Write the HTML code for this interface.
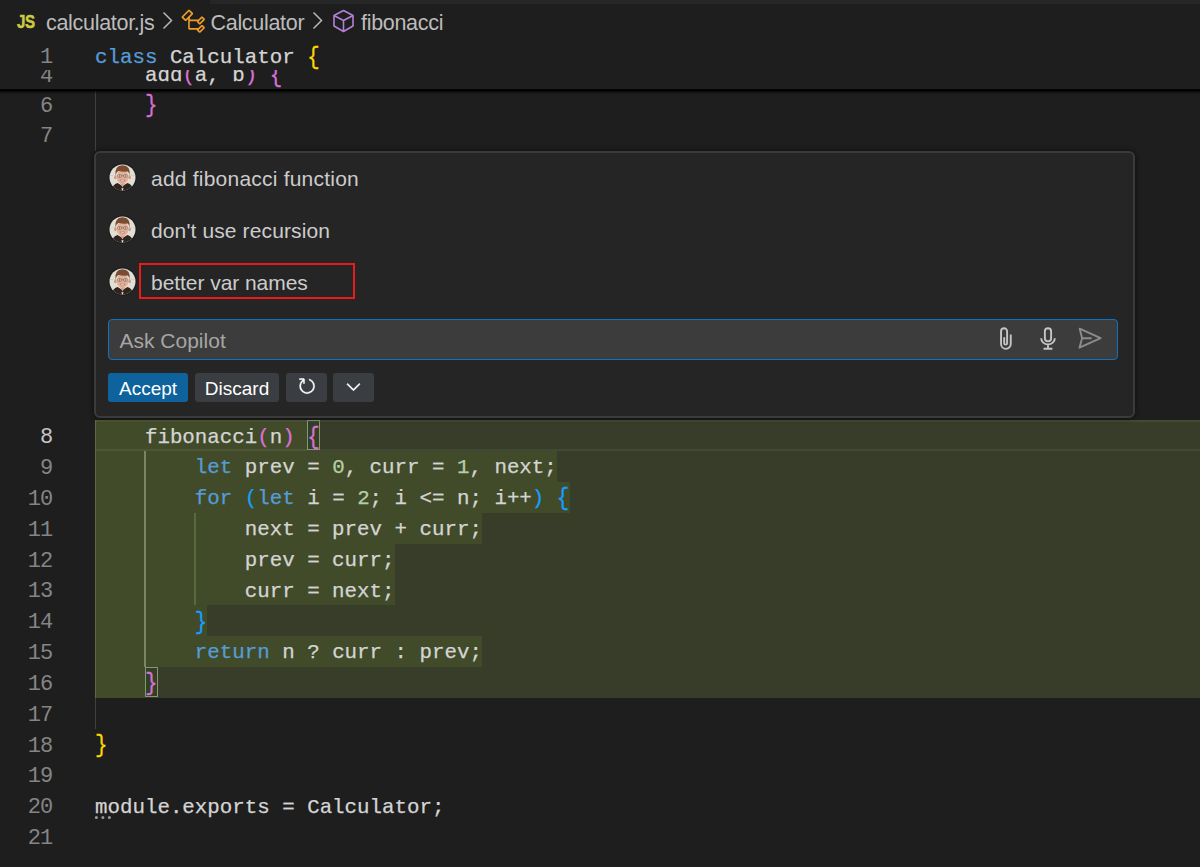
<!DOCTYPE html>
<html><head><meta charset="utf-8">
<style>
*{margin:0;padding:0;box-sizing:border-box}
html,body{width:1200px;height:867px;overflow:hidden;background:#1e1e1e}
body{position:relative;font-family:"Liberation Sans",sans-serif}
.abs{position:absolute}
.topstrip{left:210px;top:0;width:990px;height:3.5px;background:#262626}
.bc{top:3px;height:40px;line-height:40px;font-size:21.5px;letter-spacing:-0.3px;color:#bcbcbc;white-space:nowrap}
.code{font-family:"Liberation Mono",monospace;font-size:20.81px;white-space:pre;color:#d4d4d4;height:30.85px;line-height:30.85px;margin-top:2.45px;-webkit-text-stroke:0.25px}
.ln{font-family:"Liberation Mono",monospace;font-size:22px;letter-spacing:-0.8px;white-space:pre;color:#858585;height:30.85px;line-height:30.85px;left:0;width:52.5px;text-align:right;margin-top:3px}
.t{display:inline-block;transform:scaleY(1.11)}.k{color:#569cd6}.n{color:#b5cea8}.b1{color:#ffd700}.b2{color:#da70d6}.b3{color:#179fff}
.guide{width:1.5px;background:#404040}
.green{left:95px;width:1105px;background:#373d29}
.ins{background:#414b29}
.chat{font-size:21px;color:#cccccc;white-space:nowrap}
.btn{top:373.25px;height:28.25px;border-radius:3px;font-size:19px;color:#fff;line-height:32px;text-align:center}
</style></head><body>
<div class="abs topstrip"></div>

<!-- breadcrumbs -->
<div class="abs bc" style="left:17px;top:2px;font-weight:bold;color:#cbcb41;font-size:17.5px;letter-spacing:-0.5px;transform:scaleX(0.86);transform-origin:0 0;-webkit-text-stroke:0.5px #cbcb41">JS</div>
<div class="abs bc" style="left:46px">calculator.js</div>
<svg class="abs" style="left:160px;top:10px" width="16" height="22" viewBox="0 0 16 22"><path d="M3.5 2.5 L11.5 10.5 L3.5 18.5" fill="none" stroke="#b8b8b8" stroke-width="1.5"/></svg>
<svg class="abs" style="left:180px;top:8px" width="27" height="27" viewBox="0 0 16 16"><path fill="#ee9d28" d="M11.34 9.71h.71l2.67-2.67v-.71L13.38 5h-.7l-1.82 1.81h-5V5.56l1.86-1.85V3l-2-2H5L1 5v.71l2 2h.71l1.14-1.15v5.79l.5.5H10v.52l1.33 1.34h.71l2.67-2.67v-.71L13.37 10h-.7l-1.860 1.85h-5v-4H10v.48l1.340 1.38zm1.690-3.650l.63.63-2 2-.63-.63 2-2zm0 5l.63.63-2 2-.63-.63 2-2zM3.35 6.65l-1.29-1.3 3.29-3.29 1.29 1.29-3.29 3.3z"/></svg>
<div class="abs bc" style="left:210.5px">Calculator</div>
<svg class="abs" style="left:310px;top:10px" width="16" height="22" viewBox="0 0 16 22"><path d="M3.5 2.5 L11.5 10.5 L3.5 18.5" fill="none" stroke="#b8b8b8" stroke-width="1.5"/></svg>
<svg class="abs" style="left:331px;top:8px" width="25" height="26" viewBox="0 0 25 26"><path d="M12.5 2.5 L22 7.5 V18 L12.5 23.5 L3 18 V7.5 Z M3 7.5 L12.5 12.5 L22 7.5 M12.5 12.5 V23.5" fill="none" stroke="#b180d7" stroke-width="1.6" stroke-linejoin="round"/></svg>
<div class="abs bc" style="left:361px">fibonacci</div>

<!-- main editor lines 6,7 -->
<div class="abs guide" style="left:94.5px;top:89.5px;height:61px"></div>
<div class="abs ln" style="top:88.6px">6</div>
<div class="abs code" style="left:95px;top:88.6px">    <span class="b2 t">}</span></div>
<div class="abs ln" style="top:119.45px">7</div>

<!-- green inserted region lines 8-16 -->
<div class="abs green" style="top:420.1px;height:277.65px"></div>
<!-- inserted text backgrounds -->
<div class="abs ins" style="left:95px;top:420.1px;width:212.33px;height:31.1px"></div>
<div class="abs ins" style="left:95px;top:450.95px;width:462.13px;height:31.1px"></div>
<div class="abs ins" style="left:95px;top:481.8px;width:474.62px;height:31.1px"></div>
<div class="abs ins" style="left:95px;top:512.65px;width:387.19px;height:31.1px"></div>
<div class="abs ins" style="left:95px;top:543.5px;width:299.76px;height:31.1px"></div>
<div class="abs ins" style="left:95px;top:574.35px;width:299.76px;height:31.1px"></div>
<div class="abs ins" style="left:95px;top:605.2px;width:112.41px;height:31.1px"></div>
<div class="abs ins" style="left:95px;top:636.05px;width:387.19px;height:31.1px"></div>
<div class="abs ins" style="left:95px;top:666.9px;width:49.96px;height:30.85px"></div>
<!-- current line border line 8 -->
<div class="abs" style="left:95px;top:420.1px;width:1105px;height:30.85px;border-top:2px solid rgba(255,255,255,0.065);border-bottom:2px solid rgba(255,255,255,0.065)"></div>
<!-- bracket match boxes -->
<div class="abs" style="left:307.2px;top:420.4px;width:12.7px;height:29.8px;border:1.1px solid #8b9475;background:rgba(0,100,0,0.1)"></div>
<div class="abs" style="left:144.9px;top:667.2px;width:12.7px;height:30px;border:1.1px solid #8b9475;background:rgba(0,100,0,0.1)"></div>
<!-- indent guides in green -->
<div class="abs guide" style="left:94.5px;top:420.1px;height:277.65px;background:#5c6b44"></div>
<div class="abs guide" style="left:94.5px;top:697.75px;height:30.85px"></div>
<div class="abs guide" style="left:144.3px;top:450.95px;height:215.95px;background:#7b8562"></div>
<div class="abs guide" style="left:194.3px;top:512.65px;height:92.55px;background:#5a6840"></div>

<div class="abs ln" style="top:420.1px;color:#c6c6c6">8</div>
<div class="abs code" style="left:95px;top:420.1px">    fibonacci<span class="b2">(</span>n<span class="b2">)</span> <span class="b2 t">{</span></div>
<div class="abs ln" style="top:450.95px">9</div>
<div class="abs code" style="left:95px;top:450.95px">        <span class="k">let</span> prev = <span class="n">0</span>, curr = <span class="n">1</span>, next;</div>
<div class="abs ln" style="top:481.8px">10</div>
<div class="abs code" style="left:95px;top:481.8px">        <span class="k">for</span> <span class="b3">(</span><span class="k">let</span> i = <span class="n">2</span>; i &lt;= n; i++<span class="b3">)</span> <span class="b3 t">{</span></div>
<div class="abs ln" style="top:512.65px">11</div>
<div class="abs code" style="left:95px;top:512.65px">            next = prev + curr;</div>
<div class="abs ln" style="top:543.5px">12</div>
<div class="abs code" style="left:95px;top:543.5px">            prev = curr;</div>
<div class="abs ln" style="top:574.35px">13</div>
<div class="abs code" style="left:95px;top:574.35px">            curr = next;</div>
<div class="abs ln" style="top:605.2px">14</div>
<div class="abs code" style="left:95px;top:605.2px">        <span class="b3 t">}</span></div>
<div class="abs ln" style="top:636.05px">15</div>
<div class="abs code" style="left:95px;top:636.05px">        <span class="k">return</span> n ? curr : prev;</div>
<div class="abs ln" style="top:666.9px">16</div>
<div class="abs code" style="left:95px;top:666.9px">    <span class="b2 t">}</span></div>
<div class="abs ln" style="top:697.75px">17</div>
<div class="abs ln" style="top:728.6px">18</div>
<div class="abs code" style="left:95px;top:728.6px"><span class="b1 t">}</span></div>
<div class="abs ln" style="top:759.45px">19</div>
<div class="abs ln" style="top:790.3px">20</div>
<div class="abs code" style="left:95px;top:790.3px">module.exports = Calculator;</div>
<svg class="abs" style="left:0;top:0" width="1200" height="867"><g fill="#9a9a9a"><circle cx="96.4" cy="817.4" r="1.5"/><circle cx="102.9" cy="817.4" r="1.5"/><circle cx="109.4" cy="817.4" r="1.5"/></g></svg>
<div class="abs ln" style="top:821.15px">21</div>

<!-- sticky scroll -->
<div class="abs" style="left:0;top:40px;width:1200px;height:48.75px;background:#1e1e1e;overflow:hidden">
  <div class="abs ln" style="top:18.6px">4</div>
  <div class="abs code" style="left:95px;top:18.6px">    add<span class="b2">(</span>a, b<span class="b2">)</span> <span class="b2 t">{</span></div>
  <div class="abs" style="left:0;top:0;width:1200px;height:29.7px;background:#1e1e1e"></div>
  <div class="abs ln" style="top:0px">1</div>
  <div class="abs code" style="left:95px;top:0.3px"><span class="k">class</span> Calculator <span class="b1 t">{</span></div>
</div>

<div class="abs" style="left:0;top:88.75px;width:1200px;height:5px;background:linear-gradient(rgba(0,0,0,0.9) 0%,#000 30%,rgba(0,0,0,0.45) 60%,rgba(0,0,0,0) 100%)"></div>
<!-- inline chat widget -->
<div class="abs" style="left:94.1px;top:151px;width:1040.5px;height:267px;background:#252526;border:2px solid #3b3b3b;border-radius:6px;box-shadow:0 0 4px 1px rgba(0,0,0,0.42)"></div>

<svg class="abs" width="0" height="0"><defs>
<clipPath id="avc"><circle cx="14.5" cy="14.5" r="13"/></clipPath>
<g id="av">
<circle cx="14.5" cy="14.5" r="14.3" fill="#1d1d1d"/>
<g clip-path="url(#avc)">
<rect width="29" height="29" fill="#e2e0d6"/>
<path d="M1.5 12.5 H27.5" stroke="#c9c7bd" stroke-width="0.6"/>
<path d="M3.5 29 Q4 21.5 9.5 20 L14.5 23 L19.5 20 Q25 21.5 25.5 29 Z" fill="#2e2420"/>
<path d="M11.3 18.5 H17.7 L14.5 24.5 Z" fill="#dba184"/>
<path d="M13.4 25.3 H15.6 L14.5 28.5 Z" fill="#e8e8e8"/>
<ellipse cx="7.4" cy="14.3" rx="1.3" ry="1.9" fill="#d8957a"/>
<ellipse cx="21.6" cy="14.3" rx="1.3" ry="1.9" fill="#d8957a"/>
<ellipse cx="14.5" cy="14.2" rx="6" ry="6.9" fill="#e6b194"/>
<path d="M7.4 13 Q6 2.8 14.5 2.3 Q23 2.5 21.6 13 Q21 9 19.6 8.4 Q15.5 9.2 10.5 8 Q8.2 9 7.4 13 Z" fill="#7a4d32"/>
<path d="M13.6 12.6 h1.8" stroke="#5a4a42" stroke-width="0.5"/>
<rect x="9.7" y="11.6" width="3.9" height="2.8" rx="1.1" fill="#efd6c6" stroke="#5a4a42" stroke-width="0.5"/>
<rect x="15.4" y="11.6" width="3.9" height="2.8" rx="1.1" fill="#efd6c6" stroke="#5a4a42" stroke-width="0.5"/>
<circle cx="11.7" cy="13" r="0.8" fill="#4a6070"/><circle cx="17.3" cy="13" r="0.8" fill="#4a6070"/>
<path d="M11.8 17 Q14.5 20.2 17.2 17 Z" fill="#f6f2f0" stroke="#a55a60" stroke-width="0.55"/>
</g>
</g></defs></svg>
<svg class="abs" style="left:108.4px;top:163.4px" width="29" height="29"><use href="#av"/></svg>
<svg class="abs" style="left:108.4px;top:215.4px" width="29" height="29"><use href="#av"/></svg>
<svg class="abs" style="left:108.4px;top:267.2px" width="29" height="29"><use href="#av"/></svg>

<div class="abs chat" style="left:151px;top:166px;line-height:26px;letter-spacing:0.22px">add fibonacci function</div>
<div class="abs chat" style="left:151px;top:218px;line-height:26px;letter-spacing:0.12px">don't use recursion</div>
<div class="abs chat" style="left:151px;top:270px;line-height:26px;letter-spacing:-0.05px">better var names</div>
<div class="abs" style="left:139.2px;top:262.5px;width:215.6px;height:36.7px;border:2.5px solid #e81c1c"></div>

<!-- input -->
<div class="abs" style="left:108px;top:318.7px;width:1010.2px;height:41.1px;background:#3c3c3c;border:1.7px solid #1272be;border-radius:4px"></div>
<div class="abs chat" style="left:119.5px;top:328px;line-height:26px;color:#a6a6a6">Ask Copilot</div>
<svg class="abs" style="left:0;top:0" width="1200" height="867" viewBox="0 0 1200 867">
<path d="M1010.75 334.4 V344 A4.85 4.85 0 0 1 1001.05 344 V331.2 A3.02 3.02 0 0 1 1007.1 331.2 V343.15 A1.45 1.45 0 0 1 1004.2 343.15 V337.2" fill="none" stroke="#c5c5c5" stroke-width="1.9" stroke-linecap="butt"/>
<path d="M1044.87 331.3 A3.11 3.11 0 0 1 1051.1 331.3 V338.25 A3.11 3.11 0 0 1 1044.87 338.25 Z" fill="none" stroke="#c5c5c5" stroke-width="1.9"/>
<path d="M1041.2 338.2 A6.8 6.2 0 0 0 1054.8 338.2 M1048 344.4 V348.8 M1043.5 348.8 H1052.4" fill="none" stroke="#c5c5c5" stroke-width="1.9"/>
<path d="M1079.7 328.7 L1100.6 338.2 L1079.5 347.7 L1082.1 338.2 Z M1082.1 338.2 H1091.6" fill="none" stroke="#8c8c8c" stroke-width="1.9" stroke-linejoin="round"/>
</svg>
<!-- buttons -->
<div class="abs btn" style="left:108px;width:80px;background:#0e639c">Accept</div>
<div class="abs btn" style="left:195px;width:84px;background:#3a3d41">Discard</div>
<div class="abs btn" style="left:285.8px;width:41px;background:#3a3d41"></div>
<svg class="abs" style="left:296.5px;top:376.4px;overflow:visible" width="20.2" height="20.2" viewBox="0 0 16 16"><path fill="#fff" stroke="#fff" stroke-width="0.35" d="M4.681 3H2V2h3.5l.5.5V6H5V4a5 5 0 1 0 4.53-.761l.302-.954A6 6 0 1 1 4.681 3z"/></svg>
<div class="abs btn" style="left:333.3px;width:40.5px;background:#3a3d41"></div>
<svg class="abs" style="left:343.35px;top:376.2px;overflow:visible" width="21" height="21" viewBox="0 0 16 16"><path fill="#fff" stroke="#fff" stroke-width="0.55" d="M7.976 10.072l4.357-4.357.62.618L8.284 11h-.618L3 6.333l.619-.618 4.357 4.357z"/></svg>
</body></html>
